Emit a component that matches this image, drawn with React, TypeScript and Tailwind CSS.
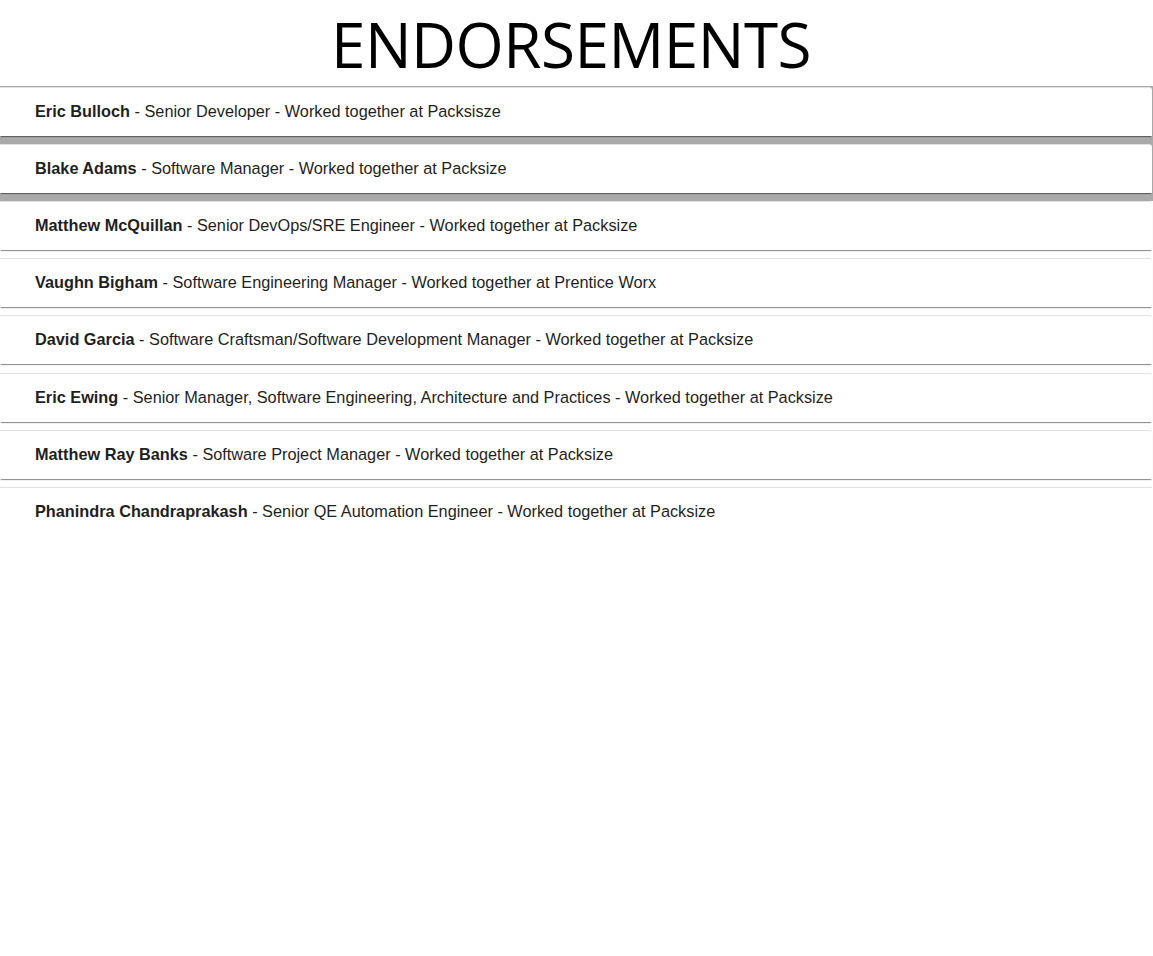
import React from 'react';

const endorsements = [
  { name: 'Eric Bulloch', title: 'Senior Developer', place: 'Packsisze' },
  { name: 'Blake Adams', title: 'Software Manager', place: 'Packsize' },
  { name: 'Matthew McQuillan', title: 'Senior DevOps/SRE Engineer', place: 'Packsize' },
  { name: 'Vaughn Bigham', title: 'Software Engineering Manager', place: 'Prentice Worx' },
  { name: 'David Garcia', title: 'Software Craftsman/Software Development Manager', place: 'Packsize' },
  {
    name: 'Eric Ewing',
    title: 'Senior Manager, Software Engineering, Architecture and Practices',
    place: 'Packsize',
  },
  { name: 'Matthew Ray Banks', title: 'Software Project Manager', place: 'Packsize' },
  { name: 'Phanindra Chandraprakash', title: 'Senior QE Automation Engineer', place: 'Packsize' },
];

const App = () => {
  return (
    <div className="min-h-[956px] bg-white">
      <h1 className="h-[86px] flex items-center justify-center pt-[2px] pr-[11px] font-['Segoe_UI','Open_Sans',sans-serif] text-[62px] font-normal text-black tracking-[-0.5px]">
        ENDORSEMENTS
      </h1>
      <div className="pr-px pt-px bg-[linear-gradient(to_bottom,#aaaaaa_0,#aaaaaa_115px,transparent_115px)]">
        {endorsements.map((e, i) => (
          <div
            key={e.name}
            className={
              i === endorsements.length - 1
                ? 'h-[48px] bg-white flex items-center pl-[35px] border-t border-[#e2e2e2]'
                : i === 4
                  ? 'h-[49px] pb-[2px] mb-[9px] bg-white flex items-center pl-[35px] border-t border-[#e2e2e2] rounded-tr-[3px] shadow-[0_2px_1px_-1px_rgba(0,0,0,0.4),0_1px_1px_0_rgba(0,0,0,0.12)]'
                  : 'h-[49px] pb-[2px] mb-[8px] bg-white flex items-center pl-[35px] border-t border-[#e2e2e2] rounded-tr-[3px] shadow-[0_2px_1px_-1px_rgba(0,0,0,0.4),0_1px_1px_0_rgba(0,0,0,0.12)]'
            }
          >
            <p className="font-['Liberation_Sans',Arial,sans-serif] text-[16.3px] text-[#1f1f1f]">
              <span className="font-bold">{e.name}</span> - {e.title} - Worked together at {e.place}
            </p>
          </div>
        ))}
      </div>
    </div>
  );
};

export default App;
